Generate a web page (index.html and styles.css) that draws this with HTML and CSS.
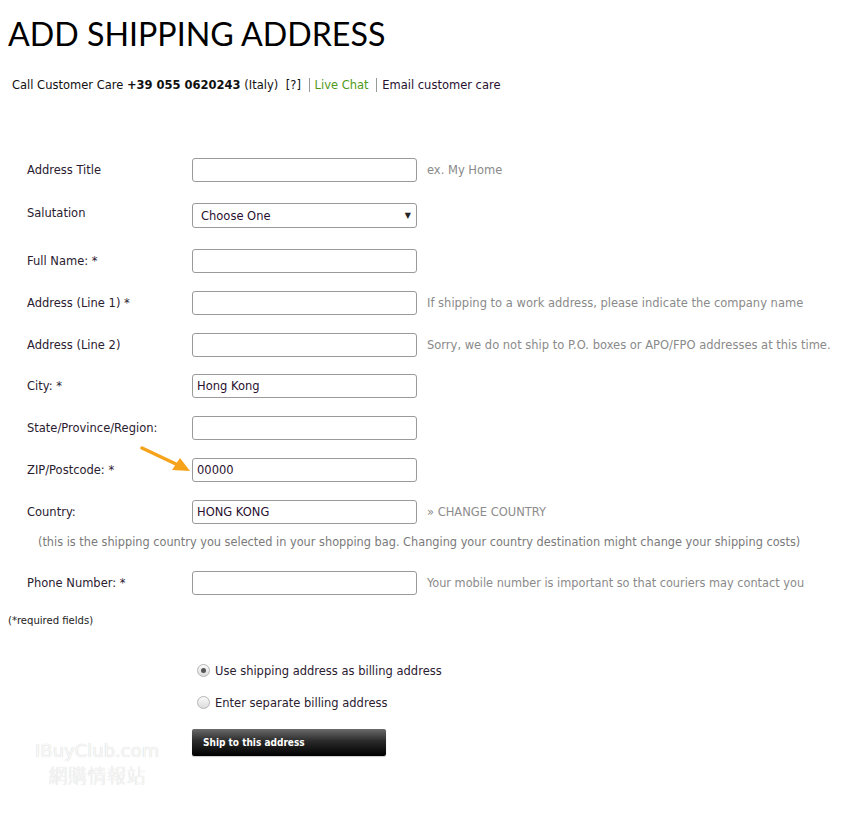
FILE: index.html
```html
<!DOCTYPE html>
<html lang="en">
<head>
    <meta charset="UTF-8">
    <meta name="viewport" content="width=device-width, initial-scale=1.0">
    <title>Add Shipping Address</title>
    <link rel="stylesheet" href="styles.css">
</head>
<body>
    <div class="page">
        <h1 class="title">ADD SHIPPING ADDRESS</h1>

        <div class="contact">
            Call Customer Care <b>+39 055 0620243</b> (Italy) <span class="help">[?]</span>
            <a class="link live">Live Chat</a>
            <a class="link email">Email customer care</a>
        </div>

        <form class="address-form">
            <div class="row first">
                <label>Address Title</label>
                <input type="text" class="field">
                <span class="hint">ex. My Home</span>
            </div>
            <div class="row second">
                <label class="raised">Salutation</label>
                <div class="field select">
                    <span>Choose One</span>
                    <span class="caret">&#9660;</span>
                </div>
            </div>
            <div class="row">
                <label>Full Name: *</label>
                <input type="text" class="field">
            </div>
            <div class="row">
                <label>Address (Line 1) *</label>
                <input type="text" class="field">
                <span class="hint">If shipping to a work address, please indicate the company name</span>
            </div>
            <div class="row">
                <label>Address (Line 2)</label>
                <input type="text" class="field">
                <span class="hint">Sorry, we do not ship to P.O. boxes or APO/FPO addresses at this time.</span>
            </div>
            <div class="row">
                <label>City: *</label>
                <input type="text" class="field" value="Hong Kong">
            </div>
            <div class="row">
                <label>State/Province/Region:</label>
                <input type="text" class="field">
            </div>
            <div class="row zip">
                <label>ZIP/Postcode: *</label>
                <input type="text" class="field" value="00000">
                <!-- annotation arrow -->
                <svg class="arrow" width="52" height="28" viewBox="0 0 52 28">
                    <line x1="2" y1="2" x2="38" y2="19" stroke="#f7a21b" stroke-width="3.5" stroke-linecap="round"/>
                    <polygon points="50,25 32,24 40,12" fill="#f7a21b"/>
                </svg>
            </div>
            <div class="row">
                <label>Country:</label>
                <input type="text" class="field" value="HONG KONG">
                <span class="hint change">&raquo; CHANGE COUNTRY</span>
            </div>
            <div class="country-note">(this is the shipping country you selected in your shopping bag. Changing your country destination might change your shipping costs)</div>
            <div class="row last">
                <label>Phone Number: *</label>
                <input type="text" class="field">
                <span class="hint narrow">Your mobile number is important so that couriers may contact you</span>
            </div>
        </form>

        <div class="required">(*required fields)</div>

        <div class="billing">
            <label class="radio"><span class="dot checked"></span>Use shipping address as billing address</label>
            <label class="radio"><span class="dot"></span>Enter separate billing address</label>
            <button class="ship-btn" type="button">Ship to this address</button>
        </div>

        <div class="watermark">
            <div>IBuyClub.com</div>
            <div class="cjk">網購情報站</div>
        </div>
    </div>
</body>
</html>
```

FILE: styles.css
```css
body {
    margin: 0;
    font-family: "DejaVu Sans", Verdana, sans-serif;
    font-size: 11.5px;
    color: #2a2030;
    background: #fff;
}
.page {
    position: relative;
    padding: 0 8px;
    height: 823px;
}
.title {
    margin: 0;
    padding-top: 14px;
    font-family: Lato, "Open Sans", sans-serif;
    font-weight: 400;
    font-size: 32.2px;
    line-height: 40px;
    color: #000;
}
.contact {
    margin-top: 24px;
    padding-left: 4px;
    line-height: 14px;
    color: #111;
}
.contact b {
    font-weight: bold;
}
.help {
    margin-left: 4px;
}
.link {
    display: inline-block;
    border-left: 1px solid #999;
    padding-left: 5px;
    margin-left: 4px;
    line-height: 14px;
}
.live {
    color: #4e9a1a;
}
.email {
    color: #2a1030;
}
.address-form {
    margin-top: 66px;
    padding-left: 19px;
}
.row {
    position: relative;
    display: flex;
    align-items: center;
    height: 24px;
    margin-bottom: 17.8px;
}
.row.first {
    margin-bottom: 21px;
}
.row.second {
    height: 25px;
    margin-bottom: 21px;
}
.row.last {
    margin-bottom: 0;
}
.row label {
    width: 165px;
    flex-shrink: 0;
}
.row label.raised {
    position: relative;
    top: -3px;
}
.field {
    box-sizing: border-box;
    width: 225px;
    height: 24px;
    margin: 0;
    padding: 0 4px;
    border: 1px solid #9a9a9a;
    border-radius: 3px;
    font-family: "DejaVu Sans", Verdana, sans-serif;
    font-size: 11.5px;
    color: #2a1030;
    background: #fff;
    flex-shrink: 0;
}
.select {
    height: 25px;
    display: flex;
    align-items: center;
    justify-content: space-between;
    padding: 0 5px 0 8px;
}
.caret {
    font-size: 8px;
    color: #222;
}
.hint {
    margin-left: 10px;
    color: #8a8a8a;
    white-space: nowrap;
}
.change {
    color: #8c8c8c;
}
.arrow {
    position: absolute;
    left: 113px;
    top: -12px;
}
.country-note {
    margin: -8px 0 0 11px;
    height: 37px;
    color: #7a7a7a;
    font-family: "DejaVu Sans Condensed", "DejaVu Sans", sans-serif;
    font-stretch: condensed;
    font-size: 12.6px;
}
.narrow {
    font-family: "DejaVu Sans Condensed", "DejaVu Sans", sans-serif;
    font-stretch: condensed;
    font-size: 12.6px;
}
.required {
    margin-top: 19px;
    font-family: "DejaVu Sans Condensed", "DejaVu Sans", sans-serif;
    font-stretch: condensed;
    font-size: 11.2px;
    color: #222;
}
.billing {
    margin: 36px 0 0 184px;
    display: flex;
    flex-direction: column;
    align-items: flex-start;
}
.radio {
    display: flex;
    align-items: center;
    height: 16px;
    margin-bottom: 16px;
    margin-left: 5px;
}
.dot {
    box-sizing: border-box;
    width: 13px;
    height: 13px;
    border-radius: 50%;
    border: 1px solid #b5b5b5;
    background: linear-gradient(#fafafa, #dcdcdc);
    margin-right: 5px;
    position: relative;
}
.dot.checked::after {
    content: "";
    position: absolute;
    left: 3px;
    top: 3px;
    width: 5px;
    height: 5px;
    border-radius: 50%;
    background: #555;
}
.ship-btn {
    margin-top: 2px;
    width: 194px;
    height: 27px;
    border: none;
    border-radius: 2px;
    background: linear-gradient(#6a6a6a 0%, #2a2a2a 45%, #000 100%);
    color: #fff;
    font-family: "DejaVu Sans Condensed", "DejaVu Sans", sans-serif;
    font-stretch: condensed;
    font-size: 10px;
    font-weight: bold;
    text-align: left;
    padding: 0 11px;
    box-shadow: 0 1px 1px rgba(0,0,0,0.2);
}
.watermark {
    position: absolute;
    left: 35px;
    top: 739px;
    color: #f8f8f8;
    font-family: "DejaVu Sans", sans-serif;
    font-size: 18px;
    line-height: 24px;
    text-align: center;
    text-shadow: 0 0 1px #c8c8c8;
}
.watermark .cjk {
    font-family: "Noto Sans CJK TC", sans-serif;
    font-weight: 300;
    font-size: 19px;
    letter-spacing: 0.5px;
}
```
